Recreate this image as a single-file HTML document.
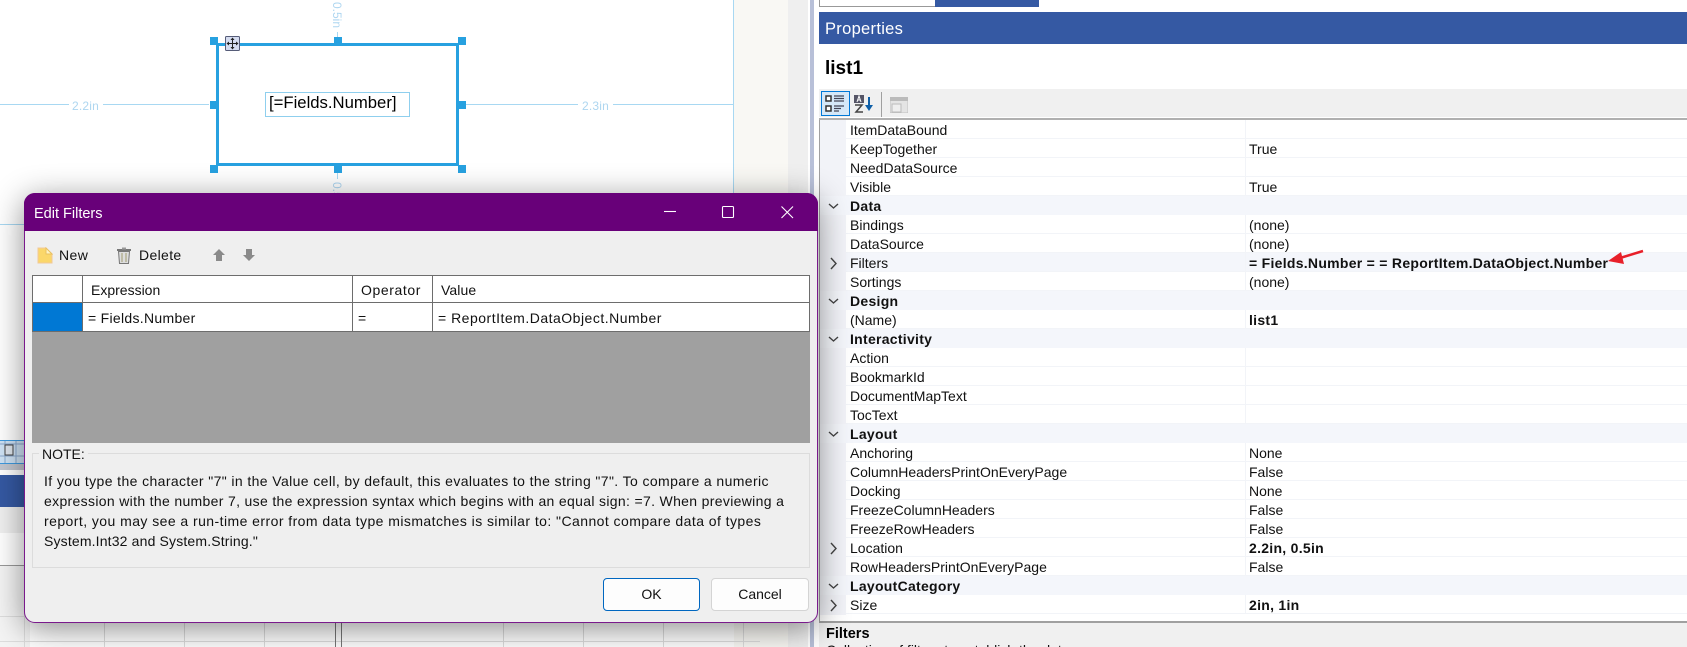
<!DOCTYPE html>
<html><head><meta charset="utf-8"><title>Edit Filters</title>
<style>
html,body{margin:0;padding:0;background:#fff}
#r{position:relative;width:1687px;height:647px;overflow:hidden;background:#fff;font-family:"Liberation Sans",sans-serif;color:#111}
#r div,#r svg{position:absolute}
.t{position:absolute;white-space:nowrap;line-height:20px;font-size:14px}
.b{font-weight:bold;letter-spacing:.28px}
.p{position:absolute;left:846px;width:841px;height:18px;border-bottom:1px solid #f2f4f8;background:#fff}
.c{position:absolute;left:819px;width:868px;height:19px;background:#f4f6fb}
.v{position:absolute;left:1245px;width:1px;height:19px;background:#f2f4f8}
.h{position:absolute;background:#27a1e0;width:8px;height:8px}
.dim{font-size:12px;color:#aed6f0;position:absolute;white-space:nowrap;line-height:14px}
.gl{background:#dcdcdc}
.tb{background:#6d6d6d}
.d{font-size:14px;color:#111}
</style></head><body><div id="r">

<!-- designer background -->
<div style="left:733px;top:0;width:1px;height:200px;background:#a8d8f2"></div>
<div style="left:734px;top:0;width:54px;height:647px;background:#f9f8f4"></div>
<div style="left:788px;top:0;width:20px;height:647px;background:#efefef"></div>
<div style="left:808px;top:0;width:2px;height:647px;background:#fff"></div>
<div style="left:810px;top:0;width:4px;height:647px;background:#b8c0d8"></div>
<div style="left:814px;top:0;width:5px;height:647px;background:#fff"></div>

<!-- dimension lines -->
<div style="left:0;top:104px;width:69px;height:1px;background:#a8d8f2"></div>
<div style="left:103px;top:104px;width:106px;height:1px;background:#a8d8f2"></div>
<div style="left:465px;top:104px;width:113px;height:1px;background:#a8d8f2"></div>
<div style="left:613px;top:104px;width:121px;height:1px;background:#a8d8f2"></div>
<div class="dim" style="left:72px;top:99px;letter-spacing:.2px">2.2in</div>
<div class="dim" style="left:582px;top:99px;letter-spacing:.2px">2.3in</div>
<div style="left:337px;top:32px;width:1px;height:5px;background:#a8d8f2"></div>
<div style="left:337px;top:173px;width:1px;height:6px;background:#a8d8f2"></div>
<div class="dim" style="left:322px;top:8px;transform:rotate(90deg);width:30px;height:14px;text-align:center">0.5in</div>
<div class="dim" style="left:322px;top:188px;transform:rotate(90deg);width:30px;height:14px;text-align:center">0.5in</div>
<div style="left:0;top:224px;width:30px;height:1px;background:#a8d8f2"></div>

<!-- selection box -->
<div style="left:216px;top:43px;width:237px;height:117px;border:3px solid #27a1e0;background:#fff"></div>
<div class="h" style="left:210px;top:37px"></div>
<div class="h" style="left:334px;top:37px"></div>
<div class="h" style="left:458px;top:37px"></div>
<div class="h" style="left:210px;top:101px"></div>
<div class="h" style="left:458px;top:101px"></div>
<div class="h" style="left:210px;top:165px"></div>
<div class="h" style="left:334px;top:165px"></div>
<div class="h" style="left:458px;top:165px"></div>
<div style="left:265px;top:92px;width:143px;height:23px;border:1px solid #8fcfee;background:#fff"></div>
<div class="t" style="left:269px;top:93px;font-size:16.700px;color:#000;line-height:20px">[=Fields.Number]</div>
<svg style="left:225px;top:36px" width="15" height="15" viewBox="0 0 15 15"><rect x=".5" y=".5" width="14" height="14" rx="1" fill="#d5dcf0" stroke="#555c78"/><path d="M7.5 2v11M2 7.5h11" stroke="#222" fill="none"/><path d="M7.5 1.5l-2 2.5h4zM7.5 13.5l-2-2.500h4zM1.500 7.500l2.500-2v4zM13.500 7.500l-2.500-2v4z" fill="#222"/></svg>

<!-- left under-dialog -->
<div style="left:0;top:440px;width:30px;height:22px;background:#cfe3f5;border-top:1px solid #3f9be0;border-bottom:1px solid #3f9be0"></div>
<svg style="left:0;top:441px" width="24" height="22" viewBox="0 0 24 22"><path d="M5 0v22M16 0v22M0 3h24M0 15h24" stroke="#8aa8cc" fill="none"/><rect x="5" y="4" width="8" height="10" fill="#dfe6ee" stroke="#444"/></svg>
<div style="left:0;top:464px;width:30px;height:6px;background:#c4c8d0"></div>
<div style="left:0;top:475px;width:30px;height:32px;background:#3559a3"></div>
<div style="left:0;top:507px;width:30px;height:26px;background:#f0f0f0"></div>
<div style="left:0;top:565px;width:30px;height:1px;background:#999"></div>
<div style="left:0;top:566px;width:30px;height:81px;background:#f4f4f4"></div>
<div style="left:0;top:616px;width:760px;height:1px;background:#ddd"></div>
<div style="left:0;top:641px;width:760px;height:1px;background:#ddd"></div>
<div class="gl" style="left:24px;top:600px;width:1px;height:47px"></div>
<div class="gl" style="left:104px;top:600px;width:1px;height:47px"></div>
<div class="gl" style="left:184px;top:600px;width:1px;height:47px"></div>
<div class="gl" style="left:264px;top:600px;width:1px;height:47px"></div>
<div class="gl" style="left:503px;top:600px;width:1px;height:47px"></div>
<div class="gl" style="left:583px;top:600px;width:1px;height:47px"></div>
<div class="gl" style="left:663px;top:600px;width:1px;height:47px"></div>
<div class="gl" style="left:743px;top:600px;width:1px;height:47px"></div>
<div style="left:335px;top:600px;width:1px;height:47px;background:#777"></div>
<div style="left:341px;top:600px;width:1px;height:47px;background:#777"></div>

<!-- right panel -->
<div style="left:819px;top:0;width:115px;height:6px;border:1px solid #999;border-top:0;background:#fff"></div>
<div style="left:935px;top:0;width:104px;height:7px;background:#3559a3"></div>
<div style="left:819px;top:12px;width:868px;height:32px;background:#3559a3"></div>
<div class="t" style="left:825px;top:19px;color:#fff;font-size:16.500px;letter-spacing:.3px">Properties</div>
<div class="t" style="left:825px;top:58px;font-weight:bold;font-size:19px;color:#000;line-height:22px">list1</div>
<div style="left:819px;top:89px;width:868px;height:28px;background:#f0f0f0"></div>
<div style="left:821px;top:91px;width:27px;height:23px;background:#d5e8f8;border:1px solid #0078d7"></div>
<svg style="left:825px;top:95px" width="22" height="18" viewBox="0 0 22 18"><g fill="#fff" stroke="#333" stroke-width="1.500"><rect x="1" y="1" width="5" height="5"/><rect x="1" y="11" width="5" height="5"/></g><path d="M9 1h10M9 3.500h10M9 6h10M9 11h10M9 13.500h7M9 16h5" stroke="#445" fill="none" stroke-width="1.200"/></svg>
<svg style="left:854px;top:95px" width="20" height="18" viewBox="0 0 20 18"><rect x="0" y="0" width="10" height="8" fill="#556"/><path d="M3 7l2-6 2 6M3.500 5h3" stroke="#fff" fill="none"/><path d="M1 10h7l-6 7h7" stroke="#444" stroke-width="1.500" fill="none"/><path d="M15 2v11" stroke="#0f5fa8" stroke-width="2" fill="none"/><path d="M11 10l4 6 4-6z" fill="#0f5fa8"/></svg>
<div style="left:881px;top:92px;width:1px;height:25px;background:#a0a0a0"></div>
<svg style="left:890px;top:97px" width="18" height="16" viewBox="0 0 18 16"><rect x="0" y="0" width="18" height="16" fill="#e4e4e4" stroke="#c0c0c0"/><rect x="0" y="0" width="18" height="4" fill="#bbb"/><rect x="2" y="7" width="9" height="8" fill="#eee" stroke="#bbb"/></svg>
<div style="left:819px;top:118px;width:868px;height:2px;background:#b0b0b0"></div>
<div style="left:819px;top:120px;width:1px;height:501px;background:#a0a0a0"></div>
<div style="left:820px;top:120px;width:26px;height:495px;background:#f2f3f8"></div>

<!-- rows -->
<div class="p" style="top:120px"></div><div class="p" style="top:139px"></div><div class="p" style="top:158px"></div><div class="p" style="top:177px"></div>
<div class="c" style="left:820px;top:196px"></div>
<div class="p" style="top:215px"></div><div class="p" style="top:234px"></div>
<div class="c" style="left:846px;top:253px;width:841px;height:18px;border-bottom:1px solid #f2f4f8"></div>
<div class="p" style="top:272px"></div>
<div class="c" style="left:820px;top:291px"></div>
<div class="p" style="top:310px"></div>
<div class="c" style="left:820px;top:329px"></div>
<div class="p" style="top:348px"></div><div class="p" style="top:367px"></div><div class="p" style="top:386px"></div><div class="p" style="top:405px"></div>
<div class="c" style="left:820px;top:424px"></div>
<div class="p" style="top:443px"></div><div class="p" style="top:462px"></div><div class="p" style="top:481px"></div><div class="p" style="top:500px"></div><div class="p" style="top:519px"></div><div class="p" style="top:538px"></div><div class="p" style="top:557px"></div>
<div class="c" style="left:820px;top:576px"></div>
<div class="p" style="top:595px"></div>
<div class="v" style="top:120px;height:76px"></div>
<div class="v" style="top:215px;height:76px"></div>
<div class="v" style="top:310px;height:19px"></div>
<div class="v" style="top:348px;height:76px"></div>
<div class="v" style="top:443px;height:133px"></div>
<div class="v" style="top:595px;height:19px"></div>

<div class="t" style="left:850px;top:120px">ItemDataBound</div>
<div class="t" style="left:850px;top:139px">KeepTogether</div><div class="t" style="left:1249px;top:139px">True</div>
<div class="t" style="left:850px;top:158px">NeedDataSource</div>
<div class="t" style="left:850px;top:177px">Visible</div><div class="t" style="left:1249px;top:177px">True</div>
<div class="t b" style="left:850px;top:196px">Data</div>
<div class="t" style="left:850px;top:215px">Bindings</div><div class="t" style="left:1249px;top:215px">(none)</div>
<div class="t" style="left:850px;top:234px">DataSource</div><div class="t" style="left:1249px;top:234px">(none)</div>
<div class="t" style="left:850px;top:253px">Filters</div><div class="t b" style="left:1249px;top:253px">= Fields.Number = = ReportItem.DataObject.Number</div>
<div class="t" style="left:850px;top:272px">Sortings</div><div class="t" style="left:1249px;top:272px">(none)</div>
<div class="t b" style="left:850px;top:291px">Design</div>
<div class="t" style="left:850px;top:310px">(Name)</div><div class="t b" style="left:1249px;top:310px">list1</div>
<div class="t b" style="left:850px;top:329px">Interactivity</div>
<div class="t" style="left:850px;top:348px">Action</div>
<div class="t" style="left:850px;top:367px">BookmarkId</div>
<div class="t" style="left:850px;top:386px">DocumentMapText</div>
<div class="t" style="left:850px;top:405px">TocText</div>
<div class="t b" style="left:850px;top:424px">Layout</div>
<div class="t" style="left:850px;top:443px">Anchoring</div><div class="t" style="left:1249px;top:443px">None</div>
<div class="t" style="left:850px;top:462px">ColumnHeadersPrintOnEveryPage</div><div class="t" style="left:1249px;top:462px">False</div>
<div class="t" style="left:850px;top:481px">Docking</div><div class="t" style="left:1249px;top:481px">None</div>
<div class="t" style="left:850px;top:500px">FreezeColumnHeaders</div><div class="t" style="left:1249px;top:500px">False</div>
<div class="t" style="left:850px;top:519px">FreezeRowHeaders</div><div class="t" style="left:1249px;top:519px">False</div>
<div class="t" style="left:850px;top:538px">Location</div><div class="t b" style="left:1249px;top:538px">2.2in, 0.5in</div>
<div class="t" style="left:850px;top:557px">RowHeadersPrintOnEveryPage</div><div class="t" style="left:1249px;top:557px">False</div>
<div class="t b" style="left:850px;top:576px">LayoutCategory</div>
<div class="t" style="left:850px;top:595px">Size</div><div class="t b" style="left:1249px;top:595px">2in, 1in</div>

<!-- chevrons and arrow -->
<svg style="left:0;top:0" width="1687" height="647" viewBox="0 0 1687 647"><g fill="none" stroke="#444" stroke-width="1.400">
<path d="M829 204l4.500 4 4.500-4M829 299l4.500 4 4.500-4M829 337l4.500 4 4.500-4M829 432l4.500 4 4.500-4M829 584l4.500 4 4.500-4"/>
<path d="M831 258l5 5.500-5 5.500M831 543l5 5.500-5 5.500M831 600l5 5.500-5 5.500"/></g>
<path d="M1643 251L1620 258" stroke="#e8202a" stroke-width="2.500" fill="none"/><path d="M1608 261L1621 252L1624 264Z" fill="#e8202a"/></svg>

<!-- bottom panel -->
<div style="left:819px;top:621px;width:868px;height:2px;background:#a0a0a0"></div>
<div style="left:819px;top:623px;width:868px;height:24px;background:#f0f0f0"></div>
<div class="t" style="left:826px;top:624px;font-weight:bold;font-size:14.500px;color:#000">Filters</div>
<div class="t" style="left:826px;top:640px;font-size:14px">Collection of filters to establish the data</div>

<!-- dialog -->
<div style="left:24px;top:193px;width:792px;height:428px;background:#efefef;border:1px solid #7a1a8c;border-radius:11px;box-shadow:0 6px 32px rgba(0,0,0,.45)"></div>
<div style="left:24px;top:193px;width:794px;height:38px;background:#680079;border-radius:11px 11px 0 0"></div>
<div class="t" style="left:34px;top:204px;color:#fff;font-size:14.500px">Edit Filters</div>
<svg style="left:660px;top:200px" width="140" height="24" viewBox="0 0 140 24"><g fill="none" stroke="#fff" stroke-width="1.100"><path d="M4 11.500h12"/><rect x="62.500" y="6.500" width="11" height="11" rx="1"/><path d="M121.500 6.500l11.500 11.500M133 6.500l-11.500 11.500"/></g></svg>

<!-- toolbar -->
<svg style="left:37px;top:247px" width="16" height="17" viewBox="0 0 16 17"><path d="M1 1h8l6 6v9H1z" fill="#fbd76a" stroke="#f0c898"/><path d="M9 1v6h6z" fill="#fff3c4" stroke="#eac060"/></svg>
<div class="t d" style="left:59px;top:245px;letter-spacing:.4px">New</div>
<svg style="left:116px;top:247px" width="16" height="17" viewBox="0 0 16 17"><path d="M1 3h14" stroke="#777" stroke-width="2"/><rect x="6" y="0.500" width="4" height="2" fill="#999"/><path d="M2.500 4.500h11l-1 12h-9z" fill="#ddd" stroke="#777"/><path d="M6 6v9M10 6v9" stroke="#a09a70"/></svg>
<div class="t d" style="left:139px;top:245px;letter-spacing:.35px">Delete</div>
<svg style="left:213px;top:249px" width="12" height="12" viewBox="0 0 12 12"><path d="M6 0L12 6H9v6H3V6H0z" fill="#8a8a8a"/></svg>
<svg style="left:243px;top:249px" width="12" height="12" viewBox="0 0 12 12"><path d="M6 12L12 6H9V0H3v6H0z" fill="#8a8a8a"/></svg>

<!-- table -->
<div style="left:32px;top:275px;width:778px;height:57px;background:#fff"></div>
<div style="left:33px;top:303px;width:50px;height:28px;background:#0078d4"></div>
<div class="tb" style="left:32px;top:275px;width:778px;height:1px"></div>
<div class="tb" style="left:32px;top:302px;width:778px;height:1px"></div>
<div class="tb" style="left:32px;top:331px;width:778px;height:1px"></div>
<div class="tb" style="left:32px;top:275px;width:1px;height:57px"></div>
<div class="tb" style="left:82px;top:275px;width:1px;height:57px"></div>
<div class="tb" style="left:352px;top:275px;width:1px;height:57px"></div>
<div class="tb" style="left:432px;top:275px;width:1px;height:57px"></div>
<div class="tb" style="left:809px;top:275px;width:1px;height:57px"></div>
<div style="left:32px;top:332px;width:778px;height:111px;background:#a0a0a0"></div>
<div class="t d" style="left:91px;top:280px">Expression</div>
<div class="t d" style="left:361px;top:280px;letter-spacing:.6px">Operator</div>
<div class="t d" style="left:441px;top:280px;letter-spacing:.1px">Value</div>
<div class="t d" style="left:88px;top:308px;letter-spacing:.3px">= Fields.Number</div>
<div class="t d" style="left:358px;top:308px">=</div>
<div class="t d" style="left:438px;top:308px;letter-spacing:.5px">= ReportItem.DataObject.Number</div>

<!-- note -->
<div style="left:32px;top:453px;width:776px;height:113px;border:1px solid #dcdcdc"></div>
<div class="t d" style="left:39px;top:444px;background:#efefef;padding:0 3px">NOTE:</div>
<div class="t d" style="left:44px;top:471px;letter-spacing:.39px">If you type the character "7" in the Value cell, by default, this evaluates to the string "7". To compare a numeric</div>
<div class="t d" style="left:44px;top:491px;letter-spacing:.33px">expression with the number 7, use the expression syntax which begins with an equal sign: =7. When previewing a</div>
<div class="t d" style="left:44px;top:511px;letter-spacing:.44px">report, you may see a run-time error from data type mismatches is similar to: "Cannot compare data of types</div>
<div class="t d" style="left:44px;top:531px;letter-spacing:.16px">System.Int32 and System.String."</div>

<!-- buttons -->
<div class="t d" style="left:603px;top:578px;width:95px;height:31px;line-height:31px;text-align:center;background:#fdfdfd;border:1.500px solid #0067c0;border-radius:4px">OK</div>
<div class="t d" style="left:711px;top:578px;width:96px;height:31px;line-height:31px;text-align:center;background:#fdfdfd;border:1px solid #d4d4d4;border-radius:4px">Cancel</div>

</div></body></html>
